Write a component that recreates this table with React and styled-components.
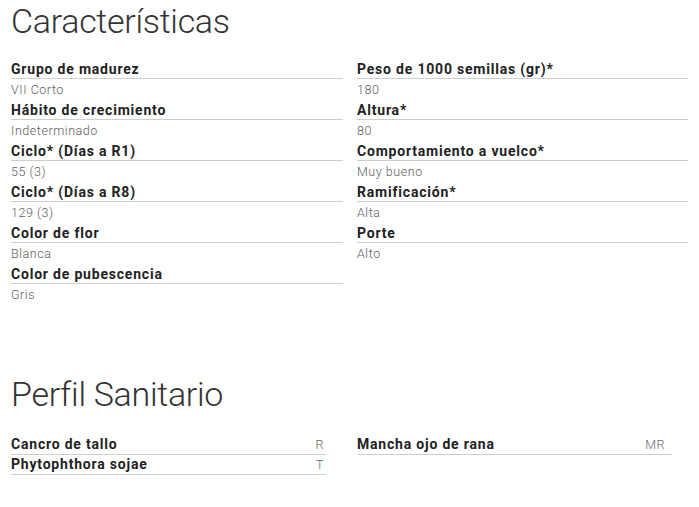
import React from 'react';
import styled, { createGlobalStyle } from 'styled-components';

const GlobalStyle = createGlobalStyle`
  html, body {
    margin: 0;
    padding: 0;
    background: #ffffff;
  }
  body {
    font-family: Roboto, "Noto Sans", sans-serif;
    color: #222;
  }
`;

/*  PAGE  */
const Page = styled.div`
  width: 699px;
  padding: 0 11px;
  box-sizing: border-box;
`;

const SectionTitle = styled.h2`
  margin: 0;
  padding-top: ${props => props.$top || 0}px;
  font-size: 34px;
  line-height: 40px;
  font-weight: 300;
  color: #333;
  letter-spacing: -0.3px;
`;

/*  CARACTERISTICAS  */
const Columns = styled.div`
  display: grid;
  grid-template-columns: 332px 331px;
  column-gap: 14px;
  margin-top: 19px;
  align-items: start;
`;

const Column = styled.div`
  display: flex;
  flex-direction: column;
`;

const Label = styled.div`
  font-size: 14px;
  line-height: 18px;
  font-weight: 700;
  letter-spacing: 0.8px;
  color: #222;
  border-bottom: 1px solid #cfcfcf;
`;

const Value = styled.div`
  font-size: 12.5px;
  line-height: 22px;
  font-weight: 300;
  letter-spacing: 0.55px;
  color: #5e5e5e;
`;

/*  PERFIL SANITARIO  */
const HealthColumns = styled.div`
  display: grid;
  grid-template-columns: 315px 315px;
  column-gap: 31px;
  margin-top: 21px;
  align-items: start;
`;

const HealthRow = styled.div`
  display: flex;
  justify-content: space-between;
  align-items: baseline;
  line-height: 19px;
  border-bottom: 1px solid #cfcfcf;
  padding-right: ${props => props.$pad || 0}px;
`;

const HealthName = styled.span`
  font-size: 14px;
  font-weight: 700;
  letter-spacing: 0.8px;
  color: #222;
`;

const HealthValue = styled.span`
  font-size: 12.5px;
  font-weight: 300;
  letter-spacing: 0.55px;
  color: #6a6a6a;
`;

const leftFeatures = [
  ['Grupo de madurez', 'VII Corto'],
  ['Hábito de crecimiento', 'Indeterminado'],
  ['Ciclo* (Días a R1)', '55 (3)'],
  ['Ciclo* (Días a R8)', '129 (3)'],
  ['Color de flor', 'Blanca'],
  ['Color de pubescencia', 'Gris'],
];

const rightFeatures = [
  ['Peso de 1000 semillas (gr)*', '180'],
  ['Altura*', '80'],
  ['Comportamiento a vuelco*', 'Muy bueno'],
  ['Ramificación*', 'Alta'],
  ['Porte', 'Alto'],
];

const healthLeft = [
  ['Cancro de tallo', 'R'],
  ['Phytophthora sojae', 'T'],
];

const healthRight = [
  ['Mancha ojo de rana', 'MR'],
];

export default function App() {
  const renderFeatures = (list) => (
    <Column>
      {list.map(([label, value]) => (
        <React.Fragment key={label}>
          <Label>{label}</Label>
          <Value>{value}</Value>
        </React.Fragment>
      ))}
    </Column>
  );

  const renderHealth = (list, pad) => (
    <Column>
      {list.map(([name, value]) => (
        <HealthRow key={name} $pad={pad}>
          <HealthName>{name}</HealthName>
          <HealthValue>{value}</HealthValue>
        </HealthRow>
      ))}
    </Column>
  );

  return (
    <Page>
      <GlobalStyle />
      <SectionTitle $top={1}>Características</SectionTitle>
      <Columns>
        {renderFeatures(leftFeatures)}
        {renderFeatures(rightFeatures)}
      </Columns>
      <SectionTitle $top={68}>Perfil Sanitario</SectionTitle>
      <HealthColumns>
        {renderHealth(healthLeft, 2)}
        {renderHealth(healthRight, 7)}
      </HealthColumns>
    </Page>
  );
}
